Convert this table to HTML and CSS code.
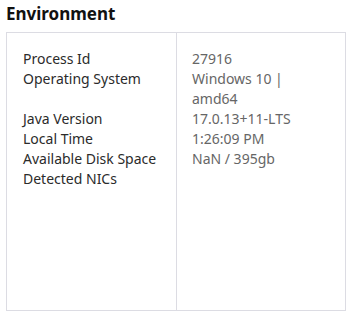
FILE: index.html
```html
<!DOCTYPE html>
<html lang="en">
<head>
    <meta charset="UTF-8">
    <title>Environment</title>
    <link rel="stylesheet" href="styles.css">
</head>
<body>
    <div class="panel">
        <h2>Environment</h2>
        <div class="env">
            <div class="label">Process Id</div>
            <div class="value">27916</div>
            <div class="label">Operating System</div>
            <div class="value">Windows 10 | amd64</div>
            <div class="label">Java Version</div>
            <div class="value">17.0.13+11-LTS</div>
            <div class="label">Local Time</div>
            <div class="value">1:26:09 PM</div>
            <div class="label">Available Disk Space</div>
            <div class="value">NaN / 395gb</div>
            <div class="label">Detected NICs</div>
            <div class="value"></div>
        </div>
    </div>
</body>
</html>
```

FILE: styles.css
```css
body {
    margin: 0;
    font-family: "Noto Sans", "Open Sans", sans-serif;
    background: #fff;
}
.panel {
    padding: 2px 10px 2px 6px;
}
h2 {
    margin: 0 0 6px;
    font-size: 17px;
    line-height: 24px;
    font-weight: 700;
    color: #111;
}
.env {
    display: grid;
    grid-template-columns: 1fr 1fr;
    grid-auto-rows: min-content;
    align-content: start;
    height: 261px;
    padding: 16px 0 0;
    border: 1px solid #dcdce3;
    background: linear-gradient(#dcdce3, #dcdce3) no-repeat 50% 0 / 1px 100%;
    font-size: 14px;
    line-height: 20px;
}
.label {
    padding: 0 16px;
    color: #2b2b2b;
}
.value {
    padding: 0 30px 0 16px;
    color: #666;
}
```
